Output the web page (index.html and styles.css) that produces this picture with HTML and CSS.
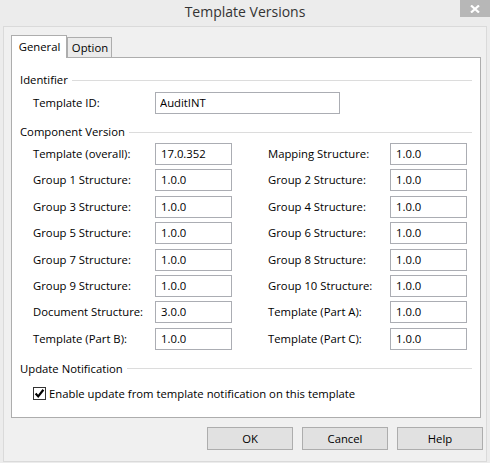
FILE: index.html
```html
<!DOCTYPE html>
<html>
<head>
<meta charset="utf-8">
<title>Template Versions</title>
<link rel="stylesheet" href="styles.css">
</head>
<body>
<div class="window">
  <div class="titlebar">
    <span class="title">Template Versions</span>
    <button class="close" type="button" aria-label="Close">
      <svg width="10" height="8" viewBox="0 0 10 8"><path d="M1 0.5 L9 7.5 M9 0.5 L1 7.5" stroke="#fff" stroke-width="2.2" fill="none"/></svg>
    </button>
  </div>
  <div class="client">
    <div class="tabs">
      <div class="tab active">General</div>
      <div class="tab">Option</div>
    </div>
    <div class="panel">
      <div class="group-head"><span>Identifier</span></div>
      <div class="id-row">
        <label class="lbl">Template ID:</label>
        <input class="field wide" type="text" value="AuditINT">
      </div>
      <div class="group-head"><span>Component Version</span></div>
      <div class="versions">
        <label class="lbl">Template (overall):</label><input class="field" type="text" value="17.0.352">
        <span></span>
        <label class="lbl">Mapping Structure:</label><input class="field" type="text" value="1.0.0">

        <label class="lbl">Group 1 Structure:</label><input class="field" type="text" value="1.0.0">
        <span></span>
        <label class="lbl">Group 2 Structure:</label><input class="field" type="text" value="1.0.0">

        <label class="lbl">Group 3 Structure:</label><input class="field" type="text" value="1.0.0">
        <span></span>
        <label class="lbl">Group 4 Structure:</label><input class="field" type="text" value="1.0.0">

        <label class="lbl">Group 5 Structure:</label><input class="field" type="text" value="1.0.0">
        <span></span>
        <label class="lbl">Group 6 Structure:</label><input class="field" type="text" value="1.0.0">

        <label class="lbl">Group 7 Structure:</label><input class="field" type="text" value="1.0.0">
        <span></span>
        <label class="lbl">Group 8 Structure:</label><input class="field" type="text" value="1.0.0">

        <label class="lbl">Group 9 Structure:</label><input class="field" type="text" value="1.0.0">
        <span></span>
        <label class="lbl">Group 10 Structure:</label><input class="field" type="text" value="1.0.0">

        <label class="lbl">Document Structure:</label><input class="field" type="text" value="3.0.0">
        <span></span>
        <label class="lbl">Template (Part A):</label><input class="field" type="text" value="1.0.0">

        <label class="lbl">Template (Part B):</label><input class="field" type="text" value="1.0.0">
        <span></span>
        <label class="lbl">Template (Part C):</label><input class="field" type="text" value="1.0.0">
      </div>
      <div class="group-head"><span>Update Notification</span></div>
      <label class="check">
        <span class="box"><svg width="11" height="11" viewBox="0 0 11 11"><path d="M1.6 5.6 L4.2 8.4 L9.4 1.8" stroke="#000" stroke-width="2.2" fill="none"/></svg></span>
        <span>Enable update from template notification on this template</span>
      </label>
    </div>
    <div class="buttons">
      <button class="btn" type="button">OK</button>
      <button class="btn" type="button">Cancel</button>
      <button class="btn" type="button">Help</button>
    </div>
  </div>
</div>
</body>
</html>
```
FILE: styles.css
```css
* { box-sizing: border-box; }
html, body {
  margin: 0;
  padding: 0;
  background: #ececec;
  font-family: "Open Sans", "Noto Sans", sans-serif;
  font-size: 11.3px;
  color: #000;
}
.window {
  width: 490px;
  height: 463px;
  display: flex;
  flex-direction: column;
}
.titlebar {
  height: 26px;
  display: grid;
  grid-template-columns: 1fr auto 1fr;
  align-items: start;
}
.title {
  grid-column: 2;
  font-size: 14px;
  line-height: 24px;
  color: #333;
}
.close {
  grid-column: 3;
  justify-self: end;
  width: 30px;
  height: 17px;
  border: 0;
  padding: 0;
  margin: 0;
  background: #b7b7b7;
  display: flex;
  align-items: center;
  justify-content: center;
}
.client {
  margin: 0 3px;
  height: 436px;
  border: 1px solid #dadada;
  background: #f0f0f0;
  padding: 8px 3px 0 7px;
  display: flex;
  flex-direction: column;
}
.tabs {
  display: flex;
  align-items: flex-end;
  height: 22px;
}
.tab {
  height: 20px;
  border: 1px solid #adadad;
  border-bottom: 0;
  background: #ebebeb;
  width: 45px;
  text-align: center;
  line-height: 20px;
  padding-left: 1px;
}
.tab.active {
  position: relative;
  z-index: 1;
  height: 23px;
  margin-bottom: -1px;
  width: 56px;
  background: #fff;
  line-height: 21px;
}
.panel {
  width: 470px;
  height: 361px;
  background: #fff;
  border: 1px solid #adadad;
  padding: 14px 8px 0 8px;
  display: flex;
  flex-direction: column;
}
.group-head {
  height: 16px;
  display: flex;
  align-items: center;
  gap: 4px;
  line-height: 16px;
}
.group-head::after {
  content: "";
  flex: 1;
  height: 1px;
  background: #dcdcdc;
}
.lbl {
  line-height: 22px;
  white-space: nowrap;
}
.field {
  height: 22px;
  width: 77px;
  border: 1px solid #abadb3;
  background: #fff;
  font: inherit;
  color: #000;
  padding: 0 0 1px 5px;
  margin: 0;
  outline: none;
}
.field.wide { width: 185px; padding-left: 4px; }
.id-row {
  display: grid;
  grid-template-columns: 122px auto;
  justify-content: start;
  margin: 4px 0 0 13px;
}
.versions {
  display: grid;
  grid-template-columns: 122px 77px 36px 122px 77px;
  grid-auto-rows: 22px;
  row-gap: 4.4px;
  margin: 3px 0 0 13px;
}
.id-row + .group-head { margin-top: 10px; }
.versions + .group-head { margin-top: 11px; }
.check {
  display: flex;
  align-items: center;
  gap: 3px;
  margin: 8px 0 0 13px;
  height: 17px;
}
.box {
  width: 13px;
  height: 13px;
  border: 1px solid #333;
  background: #fff;
  display: flex;
  align-items: center;
  justify-content: center;
}
.buttons {
  display: flex;
  justify-content: flex-end;
  gap: 9px;
  margin-top: 9px;
  width: 472px;
}
.btn {
  width: 86px;
  height: 23px;
  border: 1px solid #adadad;
  background: #e1e1e1;
  font: inherit;
  color: #000;
  padding: 0 0 1px;
  margin: 0;
}
```
